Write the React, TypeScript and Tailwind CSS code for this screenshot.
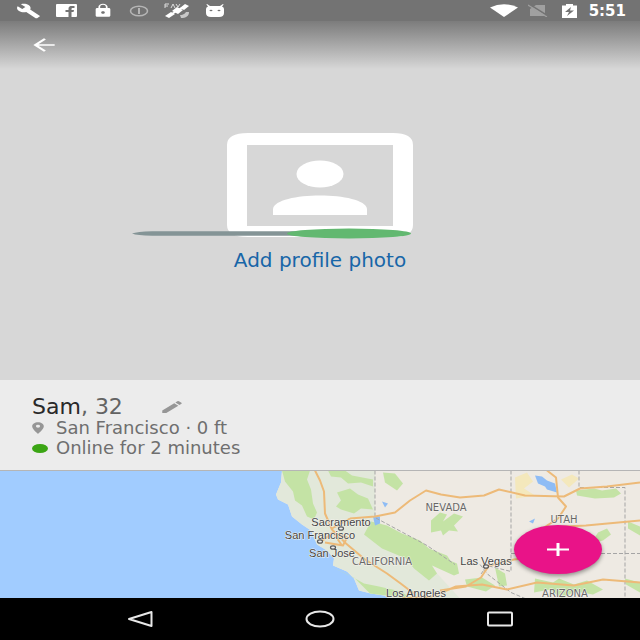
import React from "react";
import { MdBuild, MdLock, MdEdit, MdLocationOn, MdArrowBack } from "react-icons/md";

function StatusBar() {
  return (
    <div className="flex h-[21px] shrink-0 items-center justify-between bg-[#737373] pr-[14px] pl-4 text-white">
      <div className="flex items-center gap-[15px]">
        <MdBuild preserveAspectRatio="none" className="h-4 w-[25px]" />
        <svg viewBox="0 0 21 13" className="h-[13px] w-[21px]" aria-hidden="true">
          <rect width="21" height="13" rx="1" fill="white" />
          <path d="M12.500 13V8H9.500V6h3V4.500C12.500 2.600 14 2 16 2h2.500v2H17c-1 0-1.500.200-1.500.900V6H18l-.500 2h-2v5z" fill="#737373" />
        </svg>
        <MdLock preserveAspectRatio="none" className="h-[15px] w-[22px]" />
        <svg viewBox="0 0 20 12" className="h-3 w-5" fill="none" stroke="#b5b5b5" aria-hidden="true">
          <ellipse cx="10" cy="6" rx="8.500" ry="4.800" strokeWidth="1.600" />
          <path d="M10 3v6" strokeWidth="2" />
        </svg>
        <svg viewBox="0 0 26 16" className="h-4 w-[26px]" aria-hidden="true">
          <path d="M1 5V1h4M1 3h3M7 5l2-4 2 4M12 1l2 3 2-3" fill="none" stroke="#ddd" strokeWidth="1" />
          <path d="M16 5l5-4 4 2-5 4zM1 13l6-4 4 2-6 4zM8 8l5-4 6 3-5 4z" fill="white" />
          <path d="M6 12L21 3" stroke="white" strokeWidth="1.500" />
          <path d="M16 12c4 0 5-2 6-3h3c0 4-3 6-8 6z" fill="#c8c8c8" />
        </svg>
        <svg viewBox="0 0 20 13" className="h-[13px] w-5" aria-hidden="true">
          <path d="M2 0l3 2h10l3-2 .600.600L17 2.500q2 .800 2 2.500v4q0 4-5 4H6q-5 0-5-4V5q0-1.700 2-2.500L1.400.600z" fill="white" />
          <ellipse cx="6" cy="6.500" rx="1.500" ry=".800" fill="#737373" />
          <ellipse cx="14" cy="6.500" rx="1.500" ry=".800" fill="#737373" />
        </svg>
      </div>
      <div className="flex items-center">
        <svg viewBox="0 0 28 13" className="h-[13px] w-7" aria-hidden="true">
          <path d="M0 3.500Q14-3 28 3.500L14 13z" fill="white" />
        </svg>
        <svg viewBox="0 0 20 13" className="ml-[10px] h-[13px] w-5" aria-hidden="true">
          <path d="M2 12V5l6-4h9v11z" fill="#a0a0a0" />
          <path d="M1 0l19 12" stroke="#737373" strokeWidth="1.500" />
          <path d="M0 1l19 12" stroke="#a0a0a0" strokeWidth="1.200" />
        </svg>
        <svg viewBox="0 0 15 14" className="ml-[14px] h-[14px] w-[15px]" aria-hidden="true">
          <path d="M0 1.500h4V0h7v1.500h4V14H0z" fill="white" />
          <path d="M9 3L3 8h4l-2 4 7-5.500H8z" fill="#737373" />
        </svg>
        <time className="ml-3 font-['DejaVu_Sans',sans-serif] text-[15px] leading-5 font-bold">5:51</time>
      </div>
    </div>
  );
}

function Profile() {
  return (
    <section className="flex flex-1 flex-col bg-[#d7d7d7]">
      <header className="flex h-12 items-center bg-linear-to-b from-[#7c7c7c] to-[#d7d7d7] pl-7">
        <button type="button" aria-label="Back" className="text-white">
          <MdArrowBack preserveAspectRatio="none" className="h-5 w-8" />
        </button>
      </header>
      <div className="flex flex-col items-center pt-[63px]">
        <svg viewBox="0 0 376 108" className="h-[108px] w-[376px]" aria-hidden="true">
          <path fillRule="evenodd" d="M116 1h145q20 0 20 12v80q0 12-20 12H116q-21 0-21-12V13q0-12 21-12zM115 13v81h146V13z" fill="white" />
          <ellipse cx="188" cy="42" rx="23.500" ry="13.500" fill="white" />
          <path d="M141 83v-6c2-18 92-18 94 0v6z" fill="white" />
          <path d="M0 101.500Q5 99.500 20 99.200H170v4.600H20Q5 103.500 0 101.500z" fill="#849496" />
          <ellipse cx="217" cy="101.500" rx="62" ry="5" fill="#62b870" />
        </svg>
        <button type="button" className="mt-2 text-[20px] leading-6 text-[#1766a8]">Add profile photo</button>
      </div>
    </section>
  );
}

function Details() {
  return (
    <section className="flex h-[90px] shrink-0 flex-col bg-[#ececec] pt-4 pl-8 text-[18px] leading-5 text-[#6f6f6f]">
      <div className="flex items-center gap-9">
        <h1 className="text-[22px] leading-[22px] text-[#636363]"><span className="text-[#292929]">Sam</span>, 32</h1>
        <button type="button" aria-label="Edit profile" className="text-[#969696]">
          <MdEdit preserveAspectRatio="none" className="h-4 w-[26px]" />
        </button>
      </div>
      <p className="flex items-center gap-2">
        <MdLocationOn preserveAspectRatio="none" className="-ml-1 h-[14px] w-5 text-[#969696]" />
        San Francisco · 0 ft
      </p>
      <p className="flex items-center gap-2">
        <span className="h-[9px] w-4 rounded-[50%] bg-[#3ba514]" />
        Online for 2 minutes
      </p>
    </section>
  );
}

const cities = [
  { name: "Sacramento", x: 341, y: 55 },
  { name: "San Francisco", x: 320, y: 68 },
  { name: "San Jose", x: 332, y: 86 },
  { name: "Las Vegas", x: 486, y: 94 },
  { name: "Los Angeles", x: 416, y: 126 },
];

const states = [
  { name: "NEVADA", x: 446, y: 40 },
  { name: "CALIFORNIA", x: 382, y: 94 },
  { name: "UTAH", x: 564, y: 52 },
  { name: "ARIZONA", x: 565, y: 126 },
];

function MapView() {
  return (
    <section className="relative h-32 shrink-0 overflow-hidden border-t border-[#b5b5b5] bg-[#a1ccff]">
      <svg viewBox="0 0 640 128" preserveAspectRatio="xMidYMid slice" className="h-full w-full" role="img" aria-label="Map of California, Nevada, Utah and Arizona">
        <path d="M282 0L281 12 276 24 278 29 288 34 292 46 302 54 311 60 317 74 327 80 334 88 333 95 347 101 354 108 359 120 371 123 384 125 390 128H640V0z" fill="#eeeae3" />
        <path d="M282 0L281 12 276 24 278 29 288 34 292 46 302 54 311 60 317 74 327 80 334 88 333 95 347 101 354 108 359 120 371 123 384 125 390 128H460L426 91 375 48V0z" fill="#e2e8da" />
        <g fill="#c4e3a5">
          <path d="M282 0h28l-3 9 4 10 2 14 4 9-3 7-7-3-5-11-7-5-2-9-8-10z" />
          <path d="M328 0h17l7 5 21 4v7l-12-4-13 1-7-6-10-1z" />
          <path d="M337 22l13-4 8 6 10 4 5 11-12-1-7 5-13-4-5-3 5-6z" />
          <path d="M383 2l12 1 8 10-6 7-12-8z" />
          <path d="M371 51l16 4 15 8 18 7 9 8 18 7 12 18-5 2-22-10 5 8-8 7-15-12-8-10-24-10-18-14z" />
          <path d="M330 96l18 8 16 9 15 3 22 5 10 7-41-5-16-16z" />
          <path d="M431 50l9-8 7 2-4 7 11-8 9 3-9 9 4 6-9-1-6 5-2-5-10 2z" />
          <path d="M440 86l17 7 2 10-17-7zM465 109l17-2 13 8-9 6-19-5z" />
          <path d="M576 20l18-2 8 2 14-2 5 5-7 4-19 1-18-3z" />
          <path d="M535 108l18 4 6-4 15 6 13-4 16 9-10 5-18-3-13 7-12-9-16 3z" />
          <path d="M598 62l9-4 4 6-8 6-12 3zM628 51l12 5v9l-12-7zM625 108l15 4v10l-14-8zM495 97l10 6 2 12-8 1z" />
        </g>
        <g fill="#f4e8bc">
          <path d="M515 7l12-5 6 9-9 7 11 7-19 3zM561 9l11-5 7 4-10 9z" />
        </g>
        <g fill="#8ebcf5">
          <path d="M535 5l7 1 5 4 8 3 2 9-10-3-2-3-7-3zM373 46h7v7l-5 2zM382 31l6 2-3 4zM529 51l6-3-2 5z" />
        </g>
        <g fill="none" stroke="#a5a5a5" strokeWidth="1" strokeDasharray="4 2">
          <path d="M375 0v47l52 28 28 19M511 0v101l-24-6-7 10M480 94l8 10 23 18 14 6M579 0v17h46v111M511 83h129" />
        </g>
        <g fill="none" stroke="#edba78" strokeWidth="2" strokeLinejoin="round">
          <path d="M315 0l5 10 4 11 1 22 7 16 14 14 19 16 22 14 15 11 13 10" />
          <path d="M350 48l25-2 20-4 15-12 16-10 15 4 19 3 24-2 15-6 26 6 39 1 16-8 27-2 33-4M332 58l18-10" />
          <path d="M547 0l9 7 2 20 8 9-8 12-14 9 42-2 54-5M440 120l26-4 15-9 8-12 25-6 18-2M402 128l30-2 24-10 26-2 25 5 30-7 37 3 29-6 37 3" />
          <path d="M320 72l13-10 14 5-4 8-18-3M342 75l-9-13" />
        </g>
        <g className="font-['Liberation_Sans',Arial,sans-serif] text-[11px]" textAnchor="middle" fill="#444" stroke="#f5f3ee" strokeWidth="1" paintOrder="stroke">
          {cities.map((c) => <text key={c.name} x={c.x} y={c.y}>{c.name}</text>)}
        </g>
        <g className="font-['DejaVu_Sans',sans-serif] text-[10px]" textAnchor="middle" fill="#686868" stroke="#f5f3ee" strokeWidth="1" paintOrder="stroke">
          {states.map((s) => <text key={s.name} x={s.x} y={s.y}>{s.name}</text>)}
        </g>
        <g fill="#eee" stroke="#5a5a5a" strokeWidth="1.200">
          <ellipse cx="341" cy="58" rx="2.500" ry="1.700" />
          <ellipse cx="320" cy="71" rx="2.500" ry="1.700" />
          <ellipse cx="333" cy="77" rx="2.500" ry="1.700" />
          <ellipse cx="486" cy="96" rx="2.500" ry="1.700" />
        </g>
      </svg>
      <button type="button" aria-label="Add" className="absolute right-[38px] bottom-6 flex h-[49px] w-[88px] items-center justify-center rounded-[50%] bg-[#e91388] shadow-[0_2px_4px_rgba(0,0,0,0.4)]">
        <svg viewBox="0 0 22 13" className="h-[13px] w-[22px]" aria-hidden="true">
          <path d="M0 5.600h22v1.800H0zM9.500 0h3v13h-3z" fill="white" />
        </svg>
      </button>
    </section>
  );
}

function NavBar() {
  return (
    <nav className="flex h-[42px] shrink-0 items-center justify-between bg-black px-[126px]">
      <button type="button" aria-label="Back">
        <svg viewBox="0 0 28 18" className="h-[18px] w-7" fill="none" stroke="#e8e8e8" strokeWidth="2" strokeLinejoin="round"><path d="M25.500 2v14L3 9z" /></svg>
      </button>
      <button type="button" aria-label="Home">
        <svg viewBox="0 0 30 18" className="h-[18px] w-[30px]" fill="none" stroke="#e8e8e8" strokeWidth="2"><ellipse cx="15" cy="9" rx="13.500" ry="7.500" /></svg>
      </button>
      <button type="button" aria-label="Recent apps">
        <svg viewBox="0 0 28 16" className="h-4 w-7" fill="none" stroke="#e8e8e8" strokeWidth="2"><rect x="2" y="1.500" width="24" height="13" rx="1" /></svg>
      </button>
    </nav>
  );
}

export default function App() {
  return (
    <main className="flex min-h-screen flex-col overflow-hidden font-['DejaVu_Sans',sans-serif]">
      <StatusBar />
      <Profile />
      <Details />
      <MapView />
      <NavBar />
    </main>
  );
}
